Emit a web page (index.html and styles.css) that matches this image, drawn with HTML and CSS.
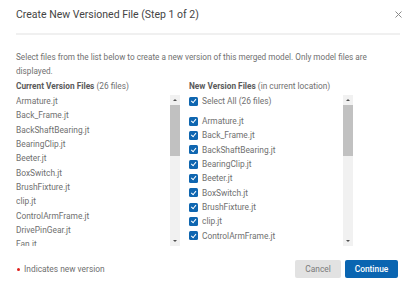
FILE: index.html
```html
<!DOCTYPE html>
<html>
<head>
<meta charset="utf-8">
<link rel="stylesheet" href="styles.css">
</head>
<body>
<div class="dialog">
  <div class="header">
    <div class="title">Create New Versioned File (Step 1 of 2)</div>
    <div class="close">
      <svg width="7" height="7" viewBox="0 0 7 7"><path d="M0.5 0.5 L6.5 6.5 M6.5 0.5 L0.5 6.5" stroke="#8a8a8a" stroke-width="1"/></svg>
    </div>
  </div>
  <div class="divider"></div>
  <p class="desc">Select files from the list below to create a new version of this merged model. Only model files are displayed.</p>
  <div class="columns">
    <div class="col">
      <div class="colhead"><b>Current Version Files</b> (26 files)</div>
      <div class="listbox">
        <div class="items">
          <div class="row">Armature.jt</div>
          <div class="row">Back_Frame.jt</div>
          <div class="row">BackShaftBearing.jt</div>
          <div class="row">BearingClip.jt</div>
          <div class="row">Beeter.jt</div>
          <div class="row">BoxSwitch.jt</div>
          <div class="row">BrushFixture.jt</div>
          <div class="row">clip.jt</div>
          <div class="row">ControlArmFrame.jt</div>
          <div class="row">DrivePinGear.jt</div>
          <div class="row">Fan.jt</div>
        </div>
        <div class="sbar">
          <div class="arrow up"></div>
          <div class="track"><div class="thumb"></div></div>
          <div class="arrow down"></div>
        </div>
      </div>
    </div>
    <div class="col">
      <div class="colhead"><b>New Version Files</b> (in current location)</div>
      <div class="listbox">
        <div class="items">
          <div class="row chk all"><span class="box"></span>Select All (26 files)</div>
          <div class="row chk"><span class="box"></span>Armature.jt</div>
          <div class="row chk"><span class="box"></span>Back_Frame.jt</div>
          <div class="row chk"><span class="box"></span>BackShaftBearing.jt</div>
          <div class="row chk"><span class="box"></span>BearingClip.jt</div>
          <div class="row chk"><span class="box"></span>Beeter.jt</div>
          <div class="row chk"><span class="box"></span>BoxSwitch.jt</div>
          <div class="row chk"><span class="box"></span>BrushFixture.jt</div>
          <div class="row chk"><span class="box"></span>clip.jt</div>
          <div class="row chk"><span class="box"></span>ControlArmFrame.jt</div>
        </div>
        <div class="sbar">
          <div class="arrow up"></div>
          <div class="track"><div class="thumb"></div></div>
          <div class="arrow down"></div>
        </div>
      </div>
    </div>
  </div>
  <div class="footer">
    <div class="legend"><span class="dot"></span>Indicates new version</div>
    <div class="buttons">
      <button class="btn cancel">Cancel</button>
      <button class="btn primary">Continue</button>
    </div>
  </div>
</div>
</body>
</html>
```
FILE: styles.css
```css
* { box-sizing: border-box; }
html, body { margin: 0; padding: 0; background: #fff; }
body { font-family: Roboto, "Noto Sans", sans-serif; color: #707070; width: 411px; height: 285px; overflow: hidden; }
.dialog { padding: 8px 11px 0 16px; }
.header { display: flex; align-items: center; justify-content: space-between; height: 14px; }
.title { font-size: 10.5px; line-height: 14px; color: #444; }
.close { width: 7px; height: 7px; display: flex; margin-right: -2px; margin-top: -1px; }
.close svg { display: block; }
.divider { margin-top: 11px; height: 2px; background: #f0f0f0; }
.desc { margin: 16px 0 0; font-size: 8.2px; line-height: 13.5px; color: #707070; }
.columns { display: grid; grid-template-columns: 164px 164px; column-gap: 9px; margin-top: 2px; }
.colhead { font-size: 8.3px; line-height: 13px; color: #707070; white-space: nowrap; }
.colhead b { font-weight: 700; color: #5a5a5a; }
.listbox { display: flex; height: 152px; margin-top: 1px; overflow: hidden; }
.items { flex: 1; overflow: hidden; }
.row { font-size: 8.4px; line-height: 14.35px; height: 14.35px; color: #707070; white-space: nowrap; display: flex; align-items: center; }
.row.all { margin-bottom: 5.5px; }
.box { width: 9px; height: 9px; border-radius: 1.5px; background: #0f66b0; margin-right: 4px; flex: none; position: relative; }
.box::after { content: ""; position: absolute; left: 2.6px; top: 1.4px; width: 2.4px; height: 4.2px; border: solid #fff; border-width: 0 1px 1px 0; transform: rotate(40deg); }
.sbar { width: 10px; flex: none; display: flex; flex-direction: column; background: #f1f1f1; margin-top: 1px; }
.arrow { height: 10px; flex: none; display: flex; align-items: center; justify-content: center; }
.arrow::before { content: ""; width: 0; height: 0; border-left: 2px solid transparent; border-right: 2px solid transparent; }
.arrow.up::before { border-bottom: 2px solid #505050; }
.arrow.down::before { border-top: 2px solid #505050; }
.track { flex: 1; }
.thumb { height: 51px; background: #c1c1c1; }
.footer { display: flex; align-items: center; justify-content: space-between; margin-top: 14px; padding-right: 2px; }
.legend { display: flex; align-items: center; font-size: 8.4px; color: #707070; padding-left: 1px; }
.dot { width: 3px; height: 3px; border-radius: 50%; background: #e0201c; margin-right: 4px; }
.buttons { display: flex; gap: 4px; }
.btn { font-family: Roboto, sans-serif; font-size: 8.4px; height: 18px; border: none; border-radius: 2px; padding: 0; }
.cancel { width: 46px; background: #e2e2e2; color: #7a7a7a; }
.primary { width: 53px; background: #0a65b1; color: #fff; font-weight: 500; }
```
